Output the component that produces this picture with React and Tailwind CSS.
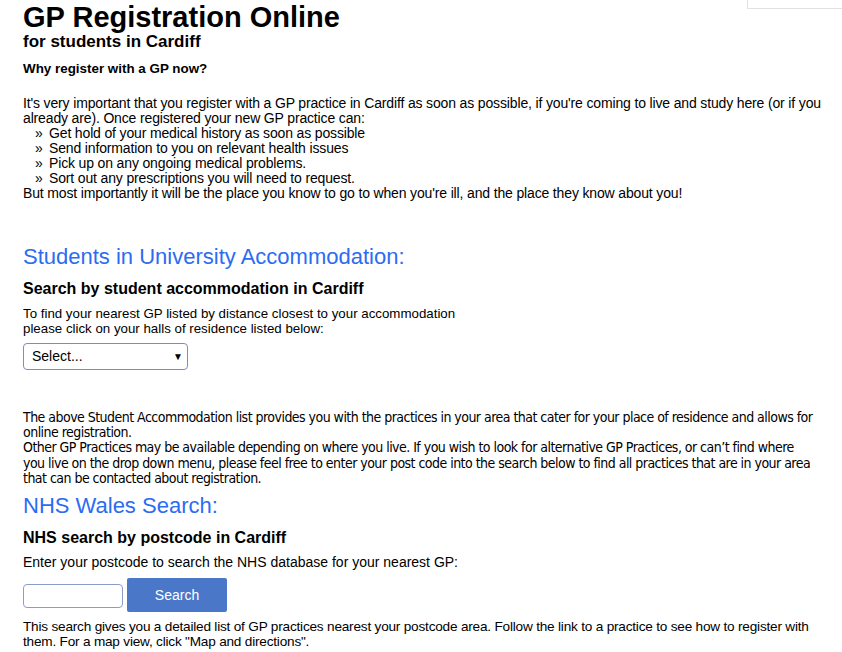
import React from 'react';

const bullets = [
  'Get hold of your medical history as soon as possible',
  'Send information to you on relevant health issues',
  'Pick up on any ongoing medical problems.',
  'Sort out any prescriptions you will need to request.',
];

export default function App() {
  return (
    <div className="relative min-h-[652px] bg-white pl-[23px] pr-[15px] text-black font-['Liberation_Sans',Arial,sans-serif]">
      {/* top-right box */}
      <div className="absolute right-0 top-0 h-[9px] w-[95px] border-b border-l border-[#e2e2e2]"></div>

      <h1 className="pt-[2px] text-[29px] font-bold leading-[30px]">GP Registration Online</h1>
      <h2 className="text-[17px] font-bold leading-[20px]">for students in Cardiff</h2>
      <h3 className="mt-[9px] text-[13.4px] font-bold leading-[16px]">Why register with a GP now?</h3>

      <div className="mt-[19px] text-[14px] leading-[15px] tracking-[-0.15px]">
        <p>
          It's very important that you register with a GP practice in Cardiff as soon as possible, if you're coming to live and study here (or if you
          already are). Once registered your new GP practice can:
        </p>
        <ul>
          {bullets.map((b) => (
            <li key={b} className="flex">
              <span className="w-[26px] pl-[12px]">»</span>
              <span>{b}</span>
            </li>
          ))}
        </ul>
        <p>But most importantly it will be the place you know to go to when you're ill, and the place they know about you!</p>
      </div>

      <h2 className="mt-[43px] text-[22px] leading-[26px] text-[#2b6cf2]">Students in University Accommodation:</h2>
      <h3 className="mt-[9px] text-[16px] font-bold leading-[20px]">Search by student accommodation in Cardiff</h3>
      <p className="mt-[7px] text-[13.3px] leading-[15px]">
        To find your nearest GP listed by distance closest to your accommodation
        <br />
        please click on your halls of residence listed below:
      </p>
      <div className="mt-[7px] flex h-[27px] w-[165px] items-center justify-between rounded-[4px] border border-[#7a8fc0] pl-[8px] pr-[4px] text-[14px]">
        <span>Select...</span>
        <span className="text-[10px]">▼</span>
      </div>

      <div className="mr-[10px] mt-[40px] font-['DejaVu_Sans_Condensed',sans-serif] text-[14px] leading-[15.2px] tracking-[-0.53px]">
        <p>The above Student Accommodation list provides you with the practices in your area that cater for your place of residence and allows for online registration.</p>
        <p>
          Other GP Practices may be available depending on where you live. If you wish to look for alternative GP Practices, or can’t find where you live on the drop down menu, please feel free to enter your post code into the search below to find all practices that are in your area that can be contacted about registration.
        </p>
      </div>

      <h2 className="mt-[7px] text-[22px] leading-[26px] text-[#2b6cf2]">NHS Wales Search:</h2>
      <h3 className="mt-[9px] text-[16px] font-bold leading-[20px]">NHS search by postcode in Cardiff</h3>
      <p className="mt-[6px] text-[14px] leading-[16px]">Enter your postcode to search the NHS database for your nearest GP:</p>
      <div className="mt-[8px] flex items-center gap-[4px]">
        <input type="text" className="mt-[2px] h-[24px] w-[100px] rounded-[4px] border border-[#8a9ccc] outline-none" />
        <button className="h-[34px] w-[100px] rounded-[2px] bg-[#4b77c9] text-[14px] text-white">Search</button>
      </div>
      <p className="mt-[8px] text-[13.6px] leading-[14.5px] tracking-[-0.2px]">
        This search gives you a detailed list of GP practices nearest your postcode area. Follow the link to a practice to see how to register with them. For a map view, click "Map and directions".
      </p>
    </div>
  );
}
